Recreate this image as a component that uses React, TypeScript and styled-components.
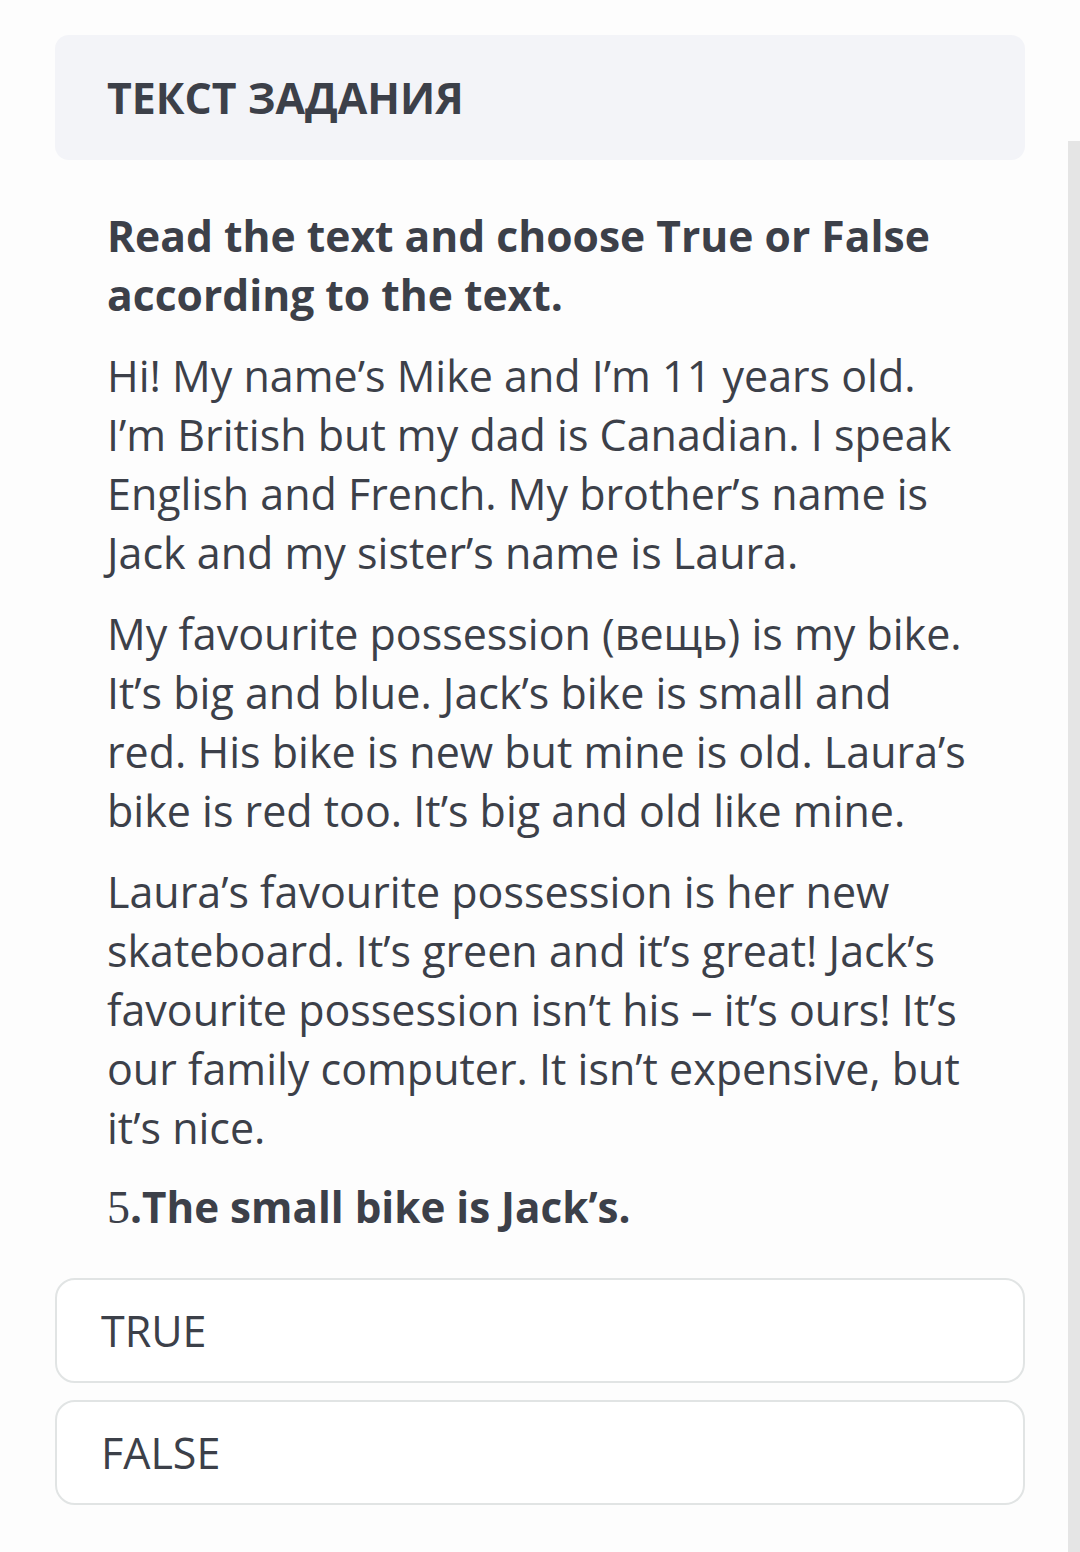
import React from 'react'
import styled, { createGlobalStyle } from 'styled-components'

const GlobalStyle = createGlobalStyle`
  html, body {
    margin: 0;
    padding: 0;
    background: #fdfdfd;
  }
  body {
    font-family: 'Open Sans', 'Noto Sans', sans-serif;
    color: #3c4049;
  }
`

const paragraphs = [
  'Hi! My name’s Mike and I’m 11 years old. I’m British but my dad is Canadian. I speak English and French. My brother’s name is Jack and my sister’s name is Laura.',
  'My favourite possession (вещь) is my bike. It’s big and blue. Jack’s bike is small and red. His bike is new but mine is old. Laura’s bike is red too. It’s big and old like mine.',
  'Laura’s favourite possession is her new skateboard. It’s green and it’s great! Jack’s favourite possession isn’t his – it’s ours! It’s our family computer. It isn’t expensive, but it’s nice.',
]

const options = ['TRUE', 'FALSE']

const App = () => {
  return (
    <>
      <GlobalStyle />
      <StyledPage>
        <StyledMain>
          <StyledHeaderCard>
            <StyledHeaderTitle>ТЕКСТ ЗАДАНИЯ</StyledHeaderTitle>
          </StyledHeaderCard>
          <StyledTask>
            <StyledInstruction>
              Read the text and choose True or False according to the text.
            </StyledInstruction>
            {paragraphs.map((p) => (
              <StyledParagraph key={p.slice(0, 12)}>{p}</StyledParagraph>
            ))}
            <StyledQuestion>
              <StyledNumber>5</StyledNumber>.The small bike is Jack’s.
            </StyledQuestion>
          </StyledTask>
          <StyledOptions>
            {options.map((o) => (
              <StyledOption key={o}>{o}</StyledOption>
            ))}
          </StyledOptions>
        </StyledMain>
        <StyledRail />
      </StyledPage>
    </>
  )
}

const StyledPage = styled.div`
  display: flex;
  width: 1080px;
  min-height: 1552px;
`

const StyledMain = styled.div`
  flex: 1;
  padding: 35px 43px 0 55px;
  box-sizing: border-box;
`

const StyledRail = styled.div`
  width: 12px;
  margin-top: 141px;
  background: #e5e5e5;
`

const StyledHeaderCard = styled.div`
  height: 125px;
  display: flex;
  align-items: center;
  padding: 0 52px;
  background: #f3f4f8;
  border-radius: 14px;
`

const StyledHeaderTitle = styled.div`
  font-size: 42.8px;
  font-weight: 700;
`

const StyledTask = styled.div`
  padding: 46px 52px 0;
`

const StyledInstruction = styled.div`
  font-size: 42.6px;
  line-height: 59px;
  font-weight: 700;
`

const StyledParagraph = styled.p`
  margin: 22px 0 0;
  font-size: 43px;
  line-height: 59px;
`

const StyledQuestion = styled.div`
  margin-top: 20px;
  font-size: 42.2px;
  line-height: 59px;
  font-weight: 700;
`

const StyledNumber = styled.span`
  font-family: 'Liberation Serif', serif;
  font-weight: 400;
  font-size: 46px;
`

const StyledOptions = styled.div`
  display: flex;
  flex-direction: column;
  gap: 17px;
  margin-top: 41px;
`

const StyledOption = styled.div`
  height: 105px;
  box-sizing: border-box;
  display: flex;
  align-items: center;
  padding: 0 44px;
  border: 2px solid #e1e4e4;
  border-radius: 20px;
  background: #fff;
  font-size: 43px;
`

export default App
